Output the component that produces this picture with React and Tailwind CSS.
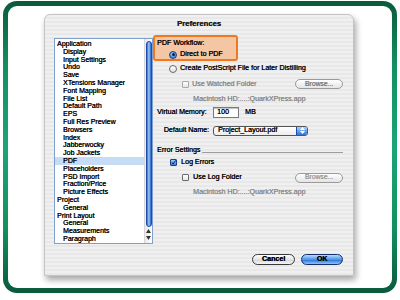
import React from 'react';

const font = { fontFamily: '"Liberation Sans", Arial, sans-serif' };

const items = [
    ['Application', 0], ['Display', 1], ['Input Settings', 1], ['Undo', 1], ['Save', 1],
    ['XTensions Manager', 1], ['Font Mapping', 1], ['File List', 1], ['Default Path', 1], ['EPS', 1],
    ['Full Res Preview', 1], ['Browsers', 1], ['Index', 1], ['Jabberwocky', 1], ['Job Jackets', 1],
    ['PDF', 1], ['Placeholders', 1], ['PSD Import', 1], ['Fraction/Price', 1], ['Picture Effects', 1],
    ['Project', 0], ['General', 1], ['Print Layout', 0], ['General', 1], ['Measurements', 1], ['Paragraph', 1],
];

const Radio = ({ on }) => on ? (
    <span className="w-[8px] h-[8px] rounded-full border border-[#1c3f86] bg-[radial-gradient(circle_at_50%_35%,#b9dcff,#3f86e0_70%)] flex items-center justify-center shrink-0">
        <span className="w-[3px] h-[3px] rounded-full bg-[#0b1b3a]" />
    </span>
) : (
    <span className="w-[8px] h-[8px] rounded-full border border-[#6b6b6b] bg-[linear-gradient(180deg,#ffffff,#e2e2e2)] shrink-0" />
);

const Check = ({ on, dim }) => on ? (
    <span className="w-[7px] h-[7px] rounded-[1px] border border-[#1c3f86] bg-[linear-gradient(180deg,#9fccff,#3a7fdc)] flex items-center justify-center shrink-0">
        <svg width="7" height="7" viewBox="0 0 7 7"><path d="M1 3.5 L3 5.5 L6.5 0.5" stroke="#0b1b3a" strokeWidth="1.4" fill="none" /></svg>
    </span>
) : (
    <span className={`w-[7px] h-[7px] rounded-[1px] border bg-[linear-gradient(180deg,#ffffff,#e6e6e6)] shrink-0 ${dim ? 'border-[#a8a8a8]' : 'border-[#6b6b6b]'}`} />
);

const Browse = ({ light }) => (
    <div className={`ml-auto w-[48px] h-[10px] rounded-full border border-[#9a9a9a] bg-[linear-gradient(180deg,#ffffff,#e4e4e4)] flex items-center justify-center text-[6.8px] leading-none ${light ? 'text-[#9a9a9a]' : 'text-[#7a7a7a]'}`}>
        Browse...
    </div>
);

export default function App() {
    return (
        <div className="w-[400px] h-[300px] bg-white pt-[1px] pl-[3px]" style={font}>
            <div className="w-[394px] h-[292px] rounded-[14px] p-[5px] bg-[linear-gradient(180deg,#0a5a3c_0%,#12905f_22%,#1ba576_50%,#12905f_78%,#0a5a3c_100%)]">
                <div className="w-full h-full bg-white rounded-[9px] pl-[36px] pt-[8px]">
                    <div className="w-[310px] h-[262px] rounded-t-[6px] border border-[#c4c4c4] shadow-[2px_4px_6px_rgba(0,0,0,0.35)] bg-[repeating-linear-gradient(180deg,#f0f0f0_0px,#f0f0f0_2px,#e8e8e8_2px,#e8e8e8_4px)] flex flex-col text-[7.1px] text-black [text-shadow:0.3px_0_0_currentColor]">
                        <div className="h-[15px] flex items-center justify-center font-bold text-[7.7px] text-[#1e1e1e] pt-[2px]">Preferences</div>
                        <div className="flex items-start pl-[9px] pt-[5px]">
                            {/* list */}
                            <div className="mt-[3px] w-[99px] h-[206px] border border-[#7fa0cf] bg-white flex">
                                <div className="flex-1 pt-[1px]">
                                    {items.map(([name, level], i) => (
                                        <div key={i} className={`h-[7.8px] leading-[7.8px] text-[7px] whitespace-nowrap ${level ? 'pl-[8px]' : 'pl-[2px]'} ${name === 'PDF' ? 'bg-[#c5dbf6]' : ''}`}>{name}</div>
                                    ))}
                                </div>
                                <div className="w-[8px] border-l border-[#d6d6d6] bg-[linear-gradient(90deg,#e9e9e9,#ffffff)] flex flex-col items-center">
                                    <div className="mt-[2px] w-[6px] h-[186px] rounded-full border border-[#1f4ca8] bg-[linear-gradient(90deg,#2f66cc,#9cc8f8_45%,#7ab2ef_60%,#2a5ec4)]" />
                                    <div className="mt-auto mb-[2px] flex flex-col items-center gap-[3px] pb-[1px]">
                                        <svg width="5" height="4" viewBox="0 0 5 4"><path d="M2.5 0 L5 4 L0 4 Z" fill="#333" /></svg>
                                        <svg width="5" height="4" viewBox="0 0 5 4"><path d="M0 0 L5 0 L2.5 4 Z" fill="#333" /></svg>
                                    </div>
                                </div>
                            </div>

                            {/* settings */}
                            <div className="w-[190px] flex flex-col">
                                <div className="w-[85px] h-[26px] border-2 border-[#f0781e] bg-[#f5c6a4] rounded-[3px] flex flex-col">
                                    <div className="pl-[2px] h-[10px] leading-[10px] mt-[1px]">PDF Workflow:</div>
                                    <div className="mt-[2px] h-[9px] pl-[14px] flex items-center gap-[3px]"><Radio on />Direct to PDF</div>
                                </div>
                                <div className="mt-[3px] h-[9px] pl-[16px] flex items-center gap-[3px]"><Radio />Create PostScript File for Later Distilling</div>
                                <div className="mt-[6px] h-[10px] pl-[29px] flex items-center gap-[3px] text-[#8a8a8a]">
                                    <Check dim />Use Watched Folder
                                    <Browse />
                                </div>
                                <div className="mt-[5px] h-[10px] pl-[40px] flex items-center text-[#8a8a8a]">Macintosh HD:....:QuarkXPress.app</div>
                                <div className="mt-[3px] h-[11px] flex items-center">
                                    <span className="w-[60px] pl-[4px]">Virtual Memory:</span>
                                    <div className="w-[26px] h-[11px] border border-[#7a7a7a] bg-white pl-[3px] flex items-center shadow-[inset_0_1px_1px_rgba(0,0,0,0.25)]">100</div>
                                    <span className="ml-[6px]">MB</span>
                                </div>
                                <div className="mt-[7px] h-[11px] flex items-center">
                                    <span className="w-[60px] pr-[4px] text-right">Default Name:</span>
                                    <div className="w-[95px] h-[10px] rounded-[3px] border border-[#555] bg-[linear-gradient(180deg,#ffffff,#ececec)] flex items-center overflow-hidden">
                                        <span className="flex-1 pl-[4px]">Project_Layout.pdf</span>
                                        <div className="w-[11px] h-full bg-[linear-gradient(180deg,#a8d2ff,#2f6fd6)] flex flex-col items-center justify-center gap-[1px] border-l border-[#1f4ca8]">
                                            <svg width="5" height="3" viewBox="0 0 5 3"><path d="M2.5 0 L5 3 L0 3 Z" fill="#fff" /></svg>
                                            <svg width="5" height="3" viewBox="0 0 5 3"><path d="M0 0 L5 0 L2.5 3 Z" fill="#fff" /></svg>
                                        </div>
                                    </div>
                                </div>
                                <div className="mt-[9px] h-[10px] pl-[4px] flex items-center">
                                    <span>Error Settings</span>
                                    <div className="flex-1 ml-[2px] mt-[4px] border-t border-[#9c9c9c]" />
                                </div>
                                <div className="mt-[2px] h-[10px] pl-[17px] flex items-center gap-[4px]"><Check on />Log Errors</div>
                                <div className="mt-[5px] h-[11px] pl-[29px] flex items-center gap-[4px]">
                                    <Check />Use Log Folder
                                    <Browse light />
                                </div>
                                <div className="mt-[4px] h-[10px] pl-[40px] flex items-center text-[#8a8a8a]">Macintosh HD:....:QuarkXPress.app</div>
                            </div>
                        </div>
                        <div className="mt-[10px] h-[11px] flex justify-end gap-[6px] pr-[10px] font-bold">
                            <div className="w-[43px] h-[11px] rounded-full border border-[#3a3a3a] bg-[linear-gradient(180deg,#ffffff,#dcdcdc_60%,#f4f4f4)] flex items-center justify-center">Cancel</div>
                            <div className="w-[42px] h-[11px] rounded-full border border-[#142e6e] bg-[linear-gradient(180deg,#b8dcff,#4d94ea_50%,#2e73d8_55%,#8cc4ff)] flex items-center justify-center">OK</div>
                        </div>
                    </div>
                </div>
            </div>
        </div>
    );
}
